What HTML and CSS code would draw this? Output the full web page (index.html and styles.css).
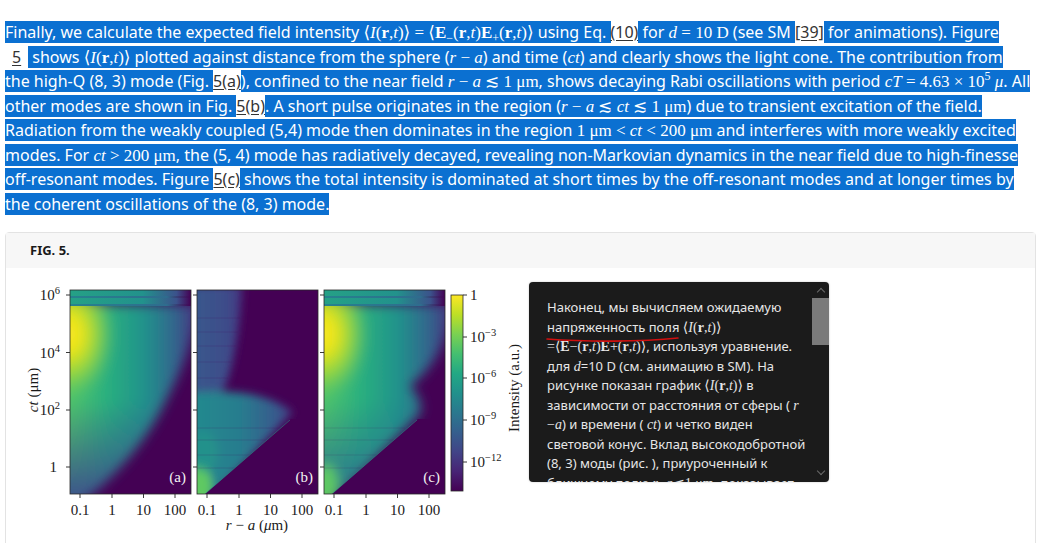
FILE: index.html
```html
<!DOCTYPE html>
<html lang="en">
<head>
<meta charset="utf-8">
<title>FIG. 5</title>
<link rel="stylesheet" href="styles.css">
</head>
<body>
<p class="para"><span class="sel">Finally, we calculate the expected field intensity <span class="m">⟨<i>I</i>(<b>r</b>,<i>t</i>)⟩ = ⟨<b>E</b><sub>−</sub>(<b>r</b>,<i>t</i>)<b>E</b><sub>+</sub>(<b>r</b>,<i>t</i>)⟩</span> using Eq. </span><a class="ref">(10)</a><span class="sel"> for <span class="m"><i>d</i> = 10 D</span> (see SM </span><a class="ref">[39]</a><span class="sel"> for animations). Figure</span><br><a class="ref pad">5</a><span class="sel"> shows <span class="m">⟨<i>I</i>(<b>r</b>,<i>t</i>)⟩</span> plotted against distance from the sphere (<span class="m"><i>r</i> − <i>a</i></span>) and time (<span class="m"><i>ct</i></span>) and clearly shows the light cone. The contribution from</span><br><span class="sel">the high-Q (8, 3) mode (Fig. </span><a class="ref">5(a)</a><span class="sel">), confined to the near field <span class="m"><i>r</i> − <i>a</i> ≲ 1 μm</span>, shows decaying Rabi oscillations with period <span class="m"><i>cT</i> = 4.63 × 10<sup>5</sup> <i>μ</i></span>. All</span><br><span class="sel">other modes are shown in Fig. </span><a class="ref">5(b)</a><span class="sel">. A short pulse originates in the region (<span class="m"><i>r</i> − <i>a</i> ≲ <i>ct</i> ≲ 1 μm</span>) due to transient excitation of the field.</span><br><span class="sel">Radiation from the weakly coupled (5,4) mode then dominates in the region <span class="m">1 μm &lt; <i>ct</i> &lt; 200 μm</span> and interferes with more weakly excited</span><br><span class="sel">modes. For <span class="m"><i>ct</i> &gt; 200 μm</span>, the (5, 4) mode has radiatively decayed, revealing non-Markovian dynamics in the near field due to high-finesse</span><br><span class="sel">off-resonant modes. Figure </span><a class="ref">5(c)</a><span class="sel"> shows the total intensity is dominated at short times by the off-resonant modes and at longer times by</span><br><span class="sel">the coherent oscillations of the (8, 3) mode.</span></p>

<section class="figbox">
  <header class="fighead">FIG. 5.</header>
  <div class="figbody">
    <svg class="plot" width="505" height="260" viewBox="22 282 505 260" xmlns="http://www.w3.org/2000/svg">
      <defs>
        <clipPath id="ca"><rect x="70" y="290" width="121" height="204"/></clipPath>
        <clipPath id="cb"><rect x="197" y="290" width="121" height="204"/></clipPath>
        <clipPath id="cc"><rect x="324" y="290" width="121" height="204"/></clipPath>
        <filter id="bl" x="-30%" y="-30%" width="160%" height="160%"><feGaussianBlur stdDeviation="6"/></filter>
        <filter id="bl2" x="-30%" y="-30%" width="160%" height="160%"><feGaussianBlur stdDeviation="4"/></filter>
        <linearGradient id="vir" x1="0" y1="1" x2="0" y2="0">
          <stop offset="0" stop-color="#440154"/>
          <stop offset="0.1" stop-color="#482475"/>
          <stop offset="0.2" stop-color="#414487"/>
          <stop offset="0.3" stop-color="#355f8d"/>
          <stop offset="0.4" stop-color="#2a788e"/>
          <stop offset="0.5" stop-color="#21918c"/>
          <stop offset="0.6" stop-color="#22a884"/>
          <stop offset="0.7" stop-color="#44bf70"/>
          <stop offset="0.8" stop-color="#7ad151"/>
          <stop offset="0.9" stop-color="#bddf26"/>
          <stop offset="1" stop-color="#fde725"/>
        </linearGradient>
        <linearGradient id="ha" gradientUnits="userSpaceOnUse" x1="70" y1="0" x2="195" y2="0">
          <stop offset="0" stop-color="#4fc46a"/>
          <stop offset="0.3" stop-color="#29af7f"/>
          <stop offset="0.6" stop-color="#21918c"/>
          <stop offset="0.85" stop-color="#33638d"/>
          <stop offset="1" stop-color="#463480"/>
        </linearGradient>
        <linearGradient id="hc" gradientUnits="userSpaceOnUse" x1="324" y1="0" x2="449" y2="0">
          <stop offset="0" stop-color="#4fc46a"/>
          <stop offset="0.3" stop-color="#29af7f"/>
          <stop offset="0.6" stop-color="#21918c"/>
          <stop offset="0.85" stop-color="#33638d"/>
          <stop offset="1" stop-color="#463480"/>
        </linearGradient>
        <linearGradient id="shadeA" gradientUnits="userSpaceOnUse" x1="0" y1="400" x2="0" y2="494">
          <stop offset="0" stop-color="#3b528b" stop-opacity="0"/>
          <stop offset="1" stop-color="#3b528b" stop-opacity="0.95"/>
        </linearGradient>
        <linearGradient id="shadeC" gradientUnits="userSpaceOnUse" x1="0" y1="400" x2="0" y2="470">
          <stop offset="0" stop-color="#2a788e" stop-opacity="0"/>
          <stop offset="1" stop-color="#2a788e" stop-opacity="0.8"/>
        </linearGradient>
        <radialGradient id="ya">
          <stop offset="0" stop-color="#fde725"/>
          <stop offset="0.3" stop-color="#e6e419"/>
          <stop offset="0.6" stop-color="#a8db34" stop-opacity="0.8"/>
          <stop offset="1" stop-color="#6ece58" stop-opacity="0"/>
        </radialGradient>
        <linearGradient id="bu" gradientUnits="userSpaceOnUse" x1="197" y1="0" x2="245" y2="0">
          <stop offset="0" stop-color="#39568c"/>
          <stop offset="0.6" stop-color="#3d4d8a"/>
          <stop offset="1" stop-color="#463480"/>
        </linearGradient>
        <linearGradient id="bb" gradientUnits="userSpaceOnUse" x1="197" y1="0" x2="295" y2="0">
          <stop offset="0" stop-color="#23898e"/>
          <stop offset="0.45" stop-color="#287c8e"/>
          <stop offset="0.8" stop-color="#375b8d"/>
          <stop offset="1" stop-color="#45377f"/>
        </linearGradient>
        <linearGradient id="stA" gradientUnits="userSpaceOnUse" x1="70" y1="0" x2="191" y2="0">
          <stop offset="0" stop-color="#25a186"/>
          <stop offset="0.6" stop-color="#22928c"/>
          <stop offset="0.88" stop-color="#3b528b"/>
          <stop offset="1" stop-color="#440154"/>
        </linearGradient>
        <linearGradient id="stC" gradientUnits="userSpaceOnUse" x1="324" y1="0" x2="445" y2="0">
          <stop offset="0" stop-color="#25a186"/>
          <stop offset="0.6" stop-color="#22928c"/>
          <stop offset="0.88" stop-color="#3b528b"/>
          <stop offset="1" stop-color="#440154"/>
        </linearGradient>
        <linearGradient id="stB" gradientUnits="userSpaceOnUse" x1="70" y1="0" x2="191" y2="0">
          <stop offset="0" stop-color="#26828e"/>
          <stop offset="0.8" stop-color="#2f6c8e"/>
          <stop offset="1" stop-color="#440154"/>
        </linearGradient>
        <linearGradient id="stD" gradientUnits="userSpaceOnUse" x1="324" y1="0" x2="445" y2="0">
          <stop offset="0" stop-color="#26828e"/>
          <stop offset="0.8" stop-color="#2f6c8e"/>
          <stop offset="1" stop-color="#440154"/>
        </linearGradient>
      </defs>

      <!-- panel (a) -->
      <g clip-path="url(#ca)">
        <rect x="70" y="290" width="121" height="204" fill="#440154"/>
        <g filter="url(#bl)">
          <path d="M55,304 L200,304 L200,312 C194,340 182,370 164,405 C144,445 112,478 80,505 L55,505 Z" fill="url(#ha)"/>
          <path d="M55,400 L166,400 C146,445 114,478 80,505 L55,505 Z" fill="url(#shadeA)"/>
          <ellipse cx="68" cy="334" rx="48" ry="66" fill="url(#ya)"/>
        </g>
        <rect x="70" y="290" width="121" height="6" fill="url(#stA)"/>
        <rect x="70" y="296" width="121" height="2" fill="url(#stB)"/>
        <rect x="70" y="298" width="121" height="6" fill="url(#stA)"/>
        <rect x="70" y="304" width="121" height="2" fill="url(#stB)"/>
      </g>
      <rect x="70" y="290" width="121" height="204" fill="none" stroke="#2a2a2a" stroke-width="0.8"/>

      <!-- panel (b) -->
      <g clip-path="url(#cb)">
        <rect x="197" y="290" width="121" height="204" fill="#440154"/>
        <g filter="url(#bl2)">
          <path d="M185,285 L242,285 C241,320 236,350 230,372 C226,386 222,394 214,398 L185,398 Z" fill="url(#bu)"/>
          <path d="M185,394 C225,388 268,392 293,412 L210,500 L185,500 Z" fill="url(#bb)"/>
          <ellipse cx="199" cy="488" rx="13" ry="24" fill="#5ec962"/>
          <ellipse cx="204" cy="452" rx="14" ry="20" fill="#25968a" opacity="0.7"/>
        </g>
        <g stroke="#440154" stroke-width="1" opacity="0.16">
          <line x1="197" y1="318" x2="240" y2="318"/>
          <line x1="197" y1="332" x2="238" y2="332"/>
          <line x1="197" y1="346" x2="236" y2="346"/>
          <line x1="197" y1="362" x2="232" y2="362"/>
          <line x1="197" y1="378" x2="228" y2="378"/>
          <line x1="197" y1="428" x2="280" y2="428"/>
          <line x1="197" y1="440" x2="268" y2="440"/>
          <line x1="197" y1="455" x2="252" y2="455"/>
          <line x1="197" y1="468" x2="238" y2="468"/>
        </g>
        <polygon points="205,494 291,419 330,419 330,500 205,500" fill="#440154"/>
        <line x1="206" y1="493" x2="290" y2="420" stroke="#2a9a88" stroke-width="1" opacity="0.5"/>
      </g>
      <rect x="197" y="290" width="121" height="204" fill="none" stroke="#2a2a2a" stroke-width="0.8"/>

      <!-- panel (c) -->
      <g clip-path="url(#cc)">
        <rect x="324" y="290" width="121" height="204" fill="#440154"/>
        <g filter="url(#bl)">
          <path d="M309,304 L454,304 L454,312 C448,340 434,368 410,386 C416,392 424,402 420,414 L330,505 L309,505 Z" fill="url(#hc)"/>
          <path d="M309,400 L418,400 L418,414 L330,505 L309,505 Z" fill="url(#shadeC)"/>
          <ellipse cx="322" cy="334" rx="48" ry="66" fill="url(#ya)"/>
          <ellipse cx="326" cy="486" rx="12" ry="22" fill="#5ec962"/>
        </g>
        <g stroke="#440154" stroke-width="1" opacity="0.14">
          <line x1="324" y1="428" x2="405" y2="428"/>
          <line x1="324" y1="440" x2="395" y2="440"/>
          <line x1="324" y1="455" x2="380" y2="455"/>
          <line x1="324" y1="468" x2="365" y2="468"/>
        </g>
        <rect x="324" y="290" width="121" height="6" fill="url(#stC)"/>
        <rect x="324" y="296" width="121" height="2" fill="url(#stD)"/>
        <rect x="324" y="298" width="121" height="6" fill="url(#stC)"/>
        <rect x="324" y="304" width="121" height="2" fill="url(#stD)"/>
        <polygon points="332,494 418,419 460,419 460,500 332,500" fill="#440154"/>
        <line x1="333" y1="493" x2="417" y2="420" stroke="#2a9a88" stroke-width="1" opacity="0.5"/>
      </g>
      <rect x="324" y="290" width="121" height="204" fill="none" stroke="#2a2a2a" stroke-width="0.8"/>

      <!-- colorbar -->
      <rect x="451" y="295" width="12" height="196" fill="url(#vir)" stroke="#2a2a2a" stroke-width="0.8"/>

      <!-- ticks -->
      <g stroke="#222" stroke-width="0.9">
        <line x1="66" y1="295" x2="70" y2="295"/><line x1="66" y1="352.5" x2="70" y2="352.5"/><line x1="66" y1="410" x2="70" y2="410"/><line x1="66" y1="467" x2="70" y2="467"/>
        <line x1="193" y1="295" x2="197" y2="295"/><line x1="193" y1="352.5" x2="197" y2="352.5"/><line x1="193" y1="410" x2="197" y2="410"/><line x1="193" y1="467" x2="197" y2="467"/>
        <line x1="320" y1="295" x2="324" y2="295"/><line x1="320" y1="352.5" x2="324" y2="352.5"/><line x1="320" y1="410" x2="324" y2="410"/><line x1="320" y1="467" x2="324" y2="467"/>
        <line x1="80" y1="494" x2="80" y2="498"/><line x1="112" y1="494" x2="112" y2="498"/><line x1="143.5" y1="494" x2="143.5" y2="498"/><line x1="175" y1="494" x2="175" y2="498"/>
        <line x1="207" y1="494" x2="207" y2="498"/><line x1="239" y1="494" x2="239" y2="498"/><line x1="270.5" y1="494" x2="270.5" y2="498"/><line x1="302" y1="494" x2="302" y2="498"/>
        <line x1="334" y1="494" x2="334" y2="498"/><line x1="366" y1="494" x2="366" y2="498"/><line x1="397.5" y1="494" x2="397.5" y2="498"/><line x1="429" y1="494" x2="429" y2="498"/>
        <line x1="463" y1="295" x2="467" y2="295"/><line x1="463" y1="337" x2="467" y2="337"/><line x1="463" y1="378" x2="467" y2="378"/><line x1="463" y1="420" x2="467" y2="420"/><line x1="463" y1="462" x2="467" y2="462"/>
      </g>

      <g class="ax">
        <text x="60" y="300" text-anchor="end">10<tspan class="sup" dy="-6">6</tspan></text>
        <text x="60" y="357.5" text-anchor="end">10<tspan class="sup" dy="-6">4</tspan></text>
        <text x="60" y="415" text-anchor="end">10<tspan class="sup" dy="-6">2</tspan></text>
        <text x="57" y="472" text-anchor="end">1</text>

        <text x="80" y="515" text-anchor="middle">0.1</text><text x="112" y="515" text-anchor="middle">1</text><text x="143.5" y="515" text-anchor="middle">10</text><text x="175" y="515" text-anchor="middle">100</text>
        <text x="207" y="515" text-anchor="middle">0.1</text><text x="239" y="515" text-anchor="middle">1</text><text x="270.5" y="515" text-anchor="middle">10</text><text x="302" y="515" text-anchor="middle">100</text>
        <text x="334" y="515" text-anchor="middle">0.1</text><text x="366" y="515" text-anchor="middle">1</text><text x="397.5" y="515" text-anchor="middle">10</text><text x="429" y="515" text-anchor="middle">100</text>

        <text x="257" y="530" text-anchor="middle"><tspan font-style="italic">r</tspan> − <tspan font-style="italic">a</tspan> (<tspan font-style="italic">μ</tspan>m)</text>
        <text transform="translate(38,390) rotate(-90)" text-anchor="middle"><tspan font-style="italic">ct</tspan> (μm)</text>

        <text x="470" y="300">1</text>
        <text x="470" y="342">10<tspan class="sup" dy="-6">−3</tspan></text>
        <text x="470" y="383">10<tspan class="sup" dy="-6">−6</tspan></text>
        <text x="470" y="425">10<tspan class="sup" dy="-6">−9</tspan></text>
        <text x="470" y="467">10<tspan class="sup" dy="-6">−12</tspan></text>
        <text transform="translate(519,388) rotate(-90)" text-anchor="middle">Intensity (a.u.)</text>

        <text class="lab" x="186" y="482" text-anchor="end">(a)</text>
        <text class="lab" x="313" y="482" text-anchor="end">(b)</text>
        <text class="lab" x="440" y="482" text-anchor="end">(c)</text>
      </g>
    </svg>

    <div class="tip">
      <div class="tip-text">
        <p>Наконец, мы вычисляем ожидаемую<br>напряженность поля <span class="tm">⟨<i>I</i>(<b>r</b>,<i>t</i>)⟩</span><br><span class="tm">=⟨<b>E</b>−(<b>r</b>,<i>t</i>)<b>E</b>+(<b>r</b>,<i>t</i>)⟩</span>, используя уравнение.<br>для <span class="tm"><i>d</i></span>=10 D (см. анимацию в SM). На<br>рисунке показан график <span class="tm">⟨<i>I</i>(<b>r</b>,<i>t</i>)⟩</span> в<br>зависимости от расстояния от сферы ( <span class="tm"><i>r</i></span><br><span class="tm">−<i>a</i></span>) и времени ( <span class="tm"><i>ct</i></span>) и четко виден<br>световой конус. Вклад высокодобротной<br>(8, 3) моды (рис. ), приуроченный к<br>ближнему полю <span class="tm"><i>r</i>−<i>a</i>≲1 μm</span>, показывает</p>
        <svg class="scribble" width="134" height="8" viewBox="0 0 134 8" xmlns="http://www.w3.org/2000/svg"><path d="M1,3 C40,6 95,6 132,2" fill="none" stroke="#d01010" stroke-width="1.6" stroke-linecap="round"/></svg>
      </div>
      <div class="tip-bar">
        <span class="chev up"></span>
        <span class="thumb"></span>
        <span class="fill"></span>
        <span class="chev down"></span>
      </div>
    </div>
  </div>
</section>
</body>
</html>
```

FILE: styles.css
```css
html, body {
  margin: 0;
  padding: 0;
  background: #ffffff;
}

body {
  font-family: "Noto Sans", "Open Sans", sans-serif;
  color: #222;
  overflow: hidden;
}

.para {
  margin: 20px 5px 0 5px;
  font-size: 16px;
  line-height: 24.5px;
  white-space: nowrap;
  color: #ffffff;
}

.sel {
  background: #0b70d1;
  color: #ffffff;
}

.m {
  font-family: "Liberation Serif", "DejaVu Serif", serif;
  font-size: 17px;
  line-height: 0;
}

.m i, .tm i {
  font-style: italic;
}

.m sub, .m sup {
  font-size: 12px;
  line-height: 0;
}

.ref {
  color: #333;
  background: #ffffff;
  text-decoration: underline;
  text-underline-offset: 2px;
}

.ref.pad {
  padding: 0 7px;
}

.figbox {
  margin: 16px 5px 0 5px;
  border: 1px solid #e3e3e3;
  border-radius: 4px;
  height: 400px;
}

.fighead {
  height: 35px;
  line-height: 35px;
  background: #f7f7f7;
  padding-left: 24px;
  font-size: 13px;
  font-weight: 700;
  color: #1a1a1a;
}

.figbody {
  display: flex;
  align-items: flex-start;
  padding: 14px 0 0 16px;
}

.plot {
  display: block;
  flex: none;
}

.ax text {
  font-family: "Liberation Serif", "DejaVu Serif", serif;
  font-size: 15px;
  fill: #1a1a1a;
}

.ax .sup {
  font-size: 10.5px;
}

.ax .lab {
  fill: #f2f2f2;
}

.tip {
  flex: none;
  margin-left: 2px;
  width: 300px;
  height: 200px;
  background: #1b1b1b;
  border-radius: 4px;
  display: flex;
  overflow: hidden;
  box-shadow: 0 0 2px rgba(0, 0, 0, 0.25);
}

.tip-text {
  position: relative;
  flex: 1;
  overflow: hidden;
  padding: 16px 2px 0 18px;
  color: #e6e6e6;
  font-size: 13px;
  line-height: 19.5px;
  white-space: nowrap;
}

.tip-text p {
  margin: 0;
}

.tm {
  font-family: "Liberation Serif", "DejaVu Serif", serif;
  font-size: 14px;
  line-height: 0;
}

.scribble {
  position: absolute;
  left: 17px;
  top: 54px;
}

.tip-bar {
  flex: none;
  width: 17px;
  display: flex;
  flex-direction: column;
  align-items: center;
}

.chev {
  flex: none;
  width: 5px;
  height: 5px;
  border-left: 1.5px solid #6a6a6a;
  border-top: 1.5px solid #6a6a6a;
}

.chev.up {
  margin-top: 7px;
  transform: rotate(45deg);
}

.chev.down {
  margin-bottom: 8px;
  transform: rotate(225deg);
}

.thumb {
  flex: none;
  align-self: stretch;
  height: 47px;
  margin-top: 3px;
  background: #7a7a7a;
}

.fill {
  flex: 1;
}
```
